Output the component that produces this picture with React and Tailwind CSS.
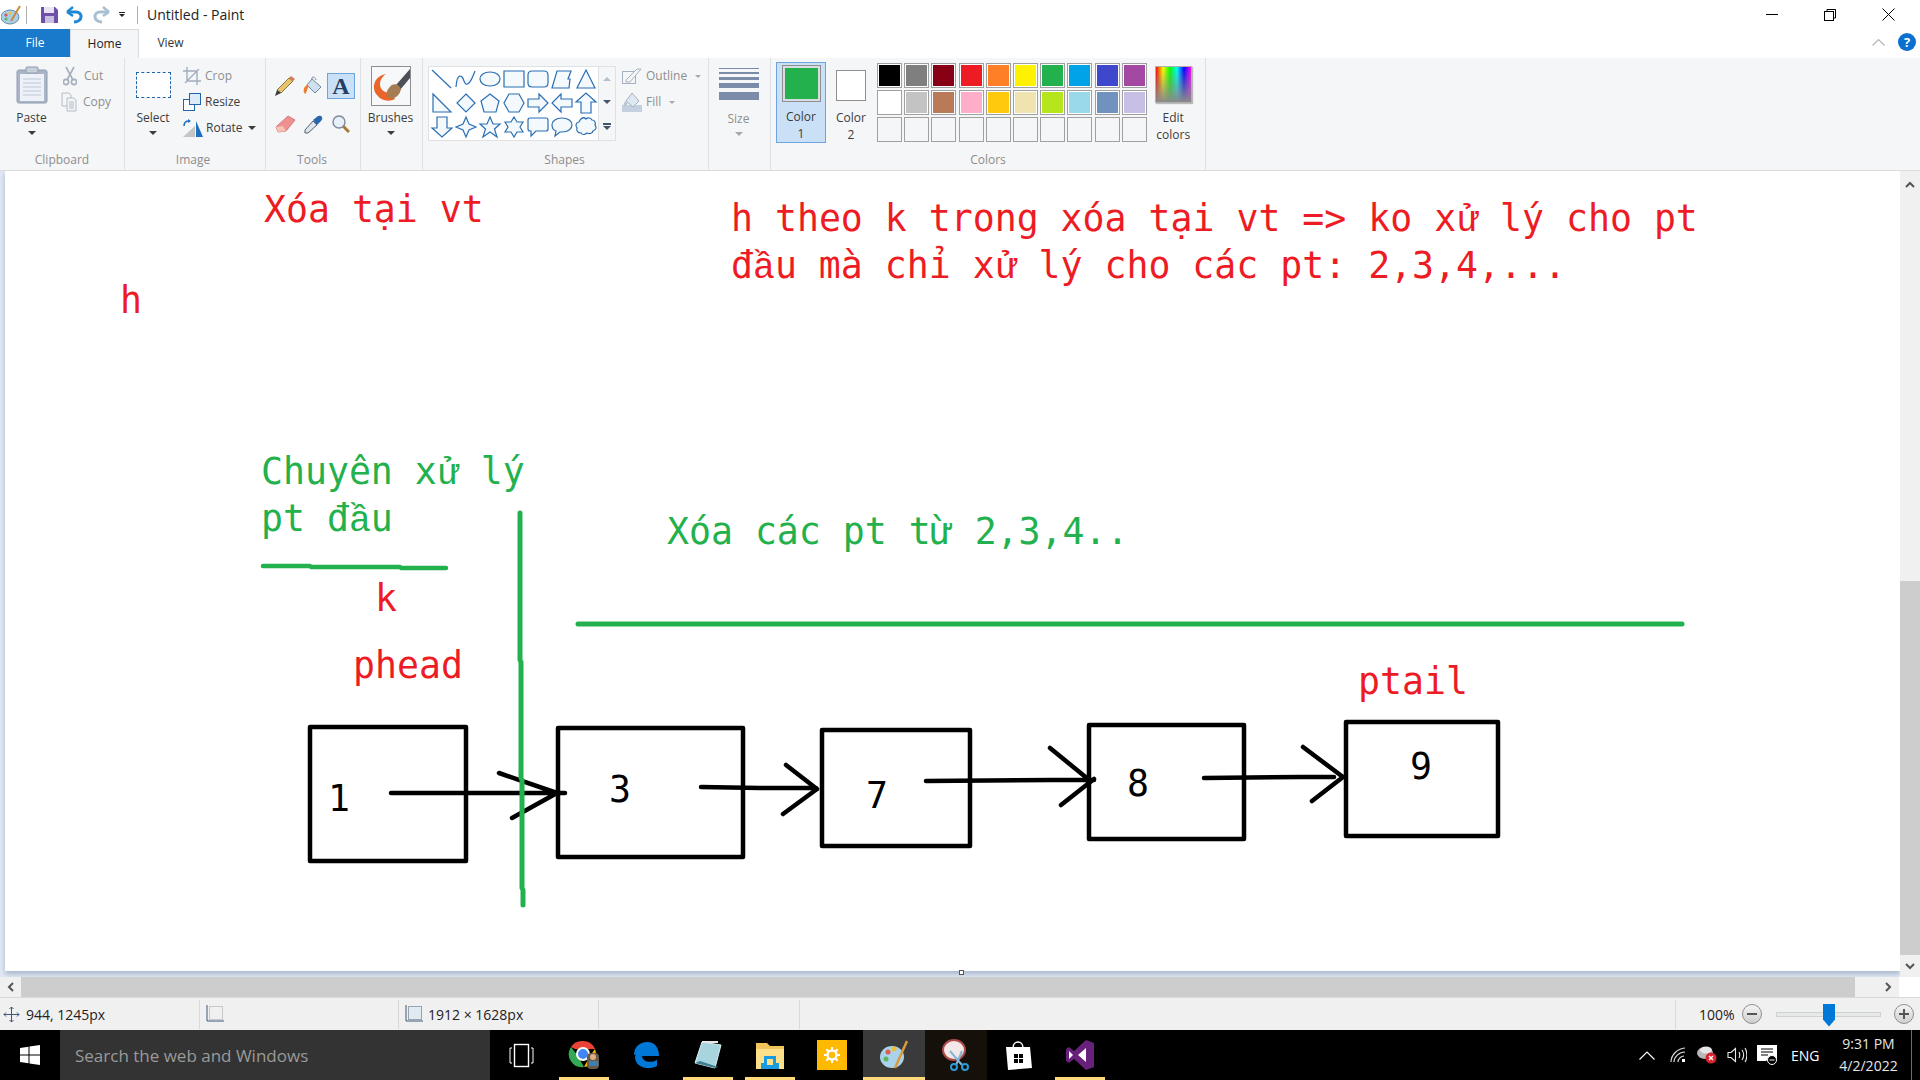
import React from "react";

const row1 = ["bg-[#000000]", "bg-[#7f7f7f]", "bg-[#880015]", "bg-[#ed1c24]", "bg-[#ff7f27]", "bg-[#fff200]", "bg-[#22b14c]", "bg-[#00a2e8]", "bg-[#3f48cc]", "bg-[#a349a4]"];
const row2 = ["bg-[#ffffff]", "bg-[#c3c3c3]", "bg-[#b97a57]", "bg-[#ffaec9]", "bg-[#ffc90e]", "bg-[#efe4b0]", "bg-[#b5e61d]", "bg-[#99d9ea]", "bg-[#7092be]", "bg-[#c8bfe7]"];
const row3 = Array(10).fill("bg-[#f5f6f7]");

const shapes = [
  "M2 3L21 21",
  "M2 20C3 6 8 7 10 14C12 20 16 18 21 4",
  "M12 5C18 5 22 8 22 12C22 16 18 19 12 19C6 19 2 16 2 12C2 8 6 5 12 5Z",
  "M2 4H22V20H2Z",
  "M6 4H18Q22 4 22 8V16Q22 20 18 20H6Q2 20 2 16V8Q2 4 6 4Z",
  "M2 21L7 4H21L18 12H20L19 21Z",
  "M12 3L21 21H3Z",
  "M3 3L21 21H3Z",
  "M12 3L21 12L12 21L3 12Z",
  "M12 3L21 10L18 21H6L3 10Z",
  "M7 3H17L22 12L17 21H7L2 12Z",
  "M2 8H13V3L22 12L13 21V16H2Z",
  "M22 8H11V3L2 12L11 21V16H22Z",
  "M7 22V11H2L12 2L22 11H17V22Z",
  "M7 2V13H2L12 22L22 13H17V2Z",
  "M12 2L15 9L22 12L15 15L12 22L9 15L2 12L9 9Z",
  "M12 2L15 9H22L16.5 14L19 22L12 17L5 22L7.5 14L2 9H9Z",
  "M12 2L15 7H21L18 12L21 17H15L12 22L9 17H3L6 12L3 7H9Z",
  "M4 3H20Q22 3 22 5V14Q22 16 20 16H10L5 21V16H4Q2 16 2 14V5Q2 3 4 3Z",
  "M12 3C18 3 22 6 22 10C22 14 18 17 12 17H10L5 21L6 16C3 15 2 12 2 10C2 6 6 3 12 3Z",
  "M7 4C9 2 11 3 12 4C14 2 17 3 18 5C21 5 22 8 21 10C23 12 22 15 19 16C18 19 15 19 13 18C11 20 8 20 7 18C4 18 2 16 3 13C1 11 2 7 5 7C5 6 6 5 7 4Z",
];

const Caret = ({ gray }) => (
  <div className={`mx-auto h-0 w-0 border-x-[4px] border-t-[4px] border-x-transparent ${gray ? "border-t-[#a8a8a8]" : "border-t-[#3c3c3c]"}`} />
);

const GroupLabel = ({ children }) => (
  <div className="absolute bottom-[2px] left-0 right-0 text-center text-[12px] leading-4 text-[#8d8d8d]">{children}</div>
);

const Paste = () => (
  <svg width="32" height="38" viewBox="0 0 32 38">
    <rect x="1" y="4" width="30" height="33" rx="2" fill="#aab6c8" stroke="#8f9bb0" />
    <rect x="4" y="8" width="24" height="27" fill="#eef2f8" />
    <path d="M7 13H25M7 17H25M7 21H25M7 25H25M7 29H25" stroke="#b9c7da" />
    <rect x="10" y="1" width="12" height="6" rx="1" fill="#c9cfd8" stroke="#8f9bb0" />
  </svg>
);

const Scissors = () => (
  <svg width="14" height="20" viewBox="0 0 14 20" fill="none" stroke="#a5afbd" strokeWidth="1.6">
    <path d="M3 1L10 14M11 1L4 14" />
    <circle cx="3" cy="16" r="2.6" />
    <circle cx="11" cy="16" r="2.6" />
  </svg>
);

const CopyIcon = () => (
  <svg width="16" height="20" viewBox="0 0 16 20" fill="#f3f5f8" stroke="#b4bcc8">
    <path d="M1 1H8L10 3V14H1Z" />
    <path d="M6 6H13L15 8V19H6Z" />
    <path d="M8 10H13M8 12H13M8 14H13M8 16H13" />
  </svg>
);

const CropIcon = () => (
  <svg width="18" height="18" viewBox="0 0 18 18" fill="none" stroke="#a3adbd" strokeWidth="1.4">
    <path d="M4 0V14H18M0 4H14V18M2 16L16 2" />
  </svg>
);

const ResizeIcon = () => (
  <svg width="18" height="18" viewBox="0 0 18 18">
    <rect x="0.5" y="6.5" width="11" height="11" fill="#fff" stroke="#1f63a8" />
    <rect x="6.5" y="0.5" width="11" height="11" fill="#dcebf7" stroke="#1f63a8" />
  </svg>
);

const RotateIcon = () => (
  <svg width="20" height="18" viewBox="0 0 20 18">
    <path d="M0 18L12 7V18Z" fill="#c4c4c4" />
    <path d="M13 2L20 18H13Z" fill="#1f6fc0" />
    <path d="M1 7C1 3 3 2 6 2" fill="none" stroke="#1f6fc0" strokeWidth="1.5" />
    <path d="M5 0L8 2L5 4Z" fill="#1f6fc0" />
  </svg>
);

const Pencil = () => (
  <svg width="20" height="20" viewBox="0 0 20 20">
    <path d="M14 2L18 5L6 17L2 14Z" fill="#e8c46a" stroke="#6b5a2a" strokeWidth="0.8" />
    <path d="M14 2L16 0L20 3L18 5Z" fill="#d97a5a" />
    <path d="M2 14L6 17L0 20Z" fill="#3c3c3c" />
  </svg>
);

const Bucket = () => (
  <svg width="20" height="20" viewBox="0 0 20 20">
    <path d="M9 3L18 11L12 17L4 9Z" fill="#cfe0ef" stroke="#6f87a0" />
    <path d="M9 4C8 0 12 0 13 4" fill="none" stroke="#6f87a0" />
    <path d="M4 9C0 11 0 16 2 18C4 17 4 12 6 10Z" fill="#f07a2e" />
  </svg>
);

const Eraser = () => (
  <svg width="21" height="18" viewBox="0 0 21 18">
    <path d="M13 1L20 5L11 16L3 17L1 12Z" fill="#ee8f90" stroke="#d77a7a" />
    <path d="M1 12L8 11L11 16L3 17Z" fill="#f6c4b4" />
  </svg>
);

const Dropper = () => (
  <svg width="19" height="19" viewBox="0 0 19 19">
    <path d="M9 6L13 10L4 18L1 18L1 15Z" fill="#dfe5ec" stroke="#55606e" />
    <path d="M9 5L14 1Q17 0 18 2Q19 4 17 6L13 10Z" fill="#2667b0" />
  </svg>
);

const Magnifier = () => (
  <svg width="18" height="18" viewBox="0 0 18 18">
    <path d="M10 10L17 17" stroke="#a9793a" strokeWidth="3" />
    <circle cx="7" cy="7" r="6" fill="#e8f1fa" stroke="#7e8a99" strokeWidth="1.4" />
  </svg>
);

const BrushIcon = () => (
  <svg width="40" height="40" viewBox="0 0 40 40">
    <rect x="0.5" y="0.5" width="39" height="39" fill="#f7f8fa" stroke="#8f8f8f" />
    <path d="M39 3L25 19L29 24L39 12Z" fill="#4b4f57" />
    <path d="M15 8C3 10 0 22 6 29C10 35 18 36 24 33L20 27C14 27 9 24 9 18C9 14 12 10 15 8Z" fill="#e9652a" />
    <path d="M18 22C22 16 28 18 30 23C29 30 22 34 18 32C15 29 15 25 18 22Z" fill="#a67c52" />
  </svg>
);

const OutlineIcon = () => (
  <svg width="20" height="16" viewBox="0 0 20 16" fill="none" stroke="#a6b2c2">
    <rect x="0.5" y="3.5" width="13" height="12" />
    <path d="M4 12L15 1L19 1L8 14L4 14Z" fill="#f5f6f7" />
  </svg>
);

const FillIcon = () => (
  <svg width="20" height="20" viewBox="0 0 20 20">
    <rect x="0" y="13" width="20" height="7" fill="#c4d0e0" />
    <path d="M10 1L17 9L11 15L4 9Z" fill="#dfe7f0" stroke="#a6b2c2" />
    <path d="M4 9C1 11 1 14 3 15C5 14 5 11 6 10Z" fill="#b9c6d6" />
  </svg>
);

const Clipboard = () => (
  <div className="relative flex w-[125px] shrink-0 border-r border-[#dfe1e3] pl-[14px] pt-[8px]">
    <div className="flex w-[35px] flex-col items-center">
      <Paste />
      <div className="mt-[6px] text-[12px] leading-4">Paste</div>
      <div className="mt-[5px] w-full"><Caret /></div>
    </div>
    <div className="ml-[12px] flex flex-col gap-[6px] text-[12px] leading-5 text-[#8f8f8f]">
      <div className="flex h-[20px] items-center gap-[7px] pl-[2px]"><Scissors />Cut</div>
      <div className="flex h-[20px] items-center gap-[6px]"><CopyIcon />Copy</div>
    </div>
    <GroupLabel>Clipboard</GroupLabel>
  </div>
);

const ImageGroup = () => (
  <div className="relative flex w-[141px] shrink-0 border-r border-[#dfe1e3] pl-[10px] pt-[8px]">
    <div className="flex w-[36px] flex-col items-center">
      <div className="mt-[6px] h-[26px] w-[35px] border border-dashed border-[#1f63a8] bg-white" />
      <div className="mt-[12px] text-[12px] leading-4">Select</div>
      <div className="mt-[5px] w-full"><Caret /></div>
    </div>
    <div className="ml-[12px] flex flex-col gap-[6px] text-[12px] leading-5">
      <div className="flex h-[20px] items-center gap-[4px] text-[#8f8f8f]"><CropIcon />Crop</div>
      <div className="flex h-[20px] items-center gap-[4px]"><ResizeIcon />Resize</div>
      <div className="flex h-[20px] items-center gap-[3px]">
        <RotateIcon />Rotate
        <div className="ml-[2px] h-0 w-0 border-x-[4px] border-t-[4px] border-x-transparent border-t-[#3c3c3c]" />
      </div>
    </div>
    <GroupLabel><span className="mr-[4px]">Image</span></GroupLabel>
  </div>
);

const Tools = () => (
  <div className="relative w-[95px] shrink-0 border-r border-[#dfe1e3] pl-[5px] pt-[15px]">
    <div className="grid grid-cols-[repeat(3,28px)] grid-rows-[26px_26px] gap-y-[12px]">
      <div className="flex items-center justify-center"><Pencil /></div>
      <div className="flex items-center justify-center"><Bucket /></div>
      <div className="flex items-center justify-center border border-[#6ca4df] bg-[#c9e0f7] font-['Liberation_Serif',serif] text-[24px] font-bold leading-none text-[#1f3f66]">A</div>
      <div className="flex items-center justify-center"><Eraser /></div>
      <div className="flex items-center justify-center"><Dropper /></div>
      <div className="flex items-center justify-center"><Magnifier /></div>
    </div>
    <GroupLabel><span className="mr-[2px]">Tools</span></GroupLabel>
  </div>
);

const Brushes = () => (
  <div className="flex w-[62px] shrink-0 flex-col items-center border-r border-[#dfe1e3] pr-[2px] pt-[8px]">
    <BrushIcon />
    <div className="mt-[4px] text-[12px] leading-4">Brushes</div>
    <div className="mt-[5px] w-full"><Caret /></div>
  </div>
);

const Shapes = () => (
  <div className="relative flex w-[286px] shrink-0 border-r border-[#dfe1e3] pl-[5px] pt-[8px]">
    <div className="flex h-[75px]">
      <div className="grid h-[75px] w-[171px] grid-cols-[repeat(7,24px)] grid-rows-[repeat(3,24px)] border border-[#dfe1e3] bg-white pl-[1px]">
        {shapes.map((d, i) => (
          <svg key={i} width="24" height="24" viewBox="0 0 24 24" fill="#f4f9fd" stroke="#2a6fb3" strokeWidth="1.2">
            <path d={d} />
          </svg>
        ))}
      </div>
      <div className="flex w-[17px] flex-col items-center justify-between border border-l-0 border-[#dfe1e3] py-[10px]">
        <div className="h-0 w-0 border-x-[4px] border-b-[4px] border-x-transparent border-b-[#b8bec6]" />
        <div className="h-0 w-0 border-x-[4px] border-t-[4px] border-x-transparent border-t-[#44546a]" />
        <div className="flex flex-col items-center gap-[1px]">
          <div className="h-[2px] w-[8px] bg-[#44546a]" />
          <div className="h-0 w-0 border-x-[4px] border-t-[4px] border-x-transparent border-t-[#44546a]" />
        </div>
      </div>
    </div>
    <div className="ml-[6px] flex flex-col gap-[6px] text-[12px] leading-5 text-[#8f8f8f]">
      <div className="flex h-[20px] items-center gap-[4px]">
        <OutlineIcon />Outline
        <div className="ml-[4px] h-0 w-0 border-x-[3px] border-t-[3px] border-x-transparent border-t-[#a8a8a8]" />
      </div>
      <div className="flex h-[20px] items-center gap-[4px]">
        <FillIcon />Fill
        <div className="ml-[4px] h-0 w-0 border-x-[3px] border-t-[3px] border-x-transparent border-t-[#a8a8a8]" />
      </div>
    </div>
    <GroupLabel><span className="mr-[2px]">Shapes</span></GroupLabel>
  </div>
);

const SizeGroup = () => (
  <div className="flex w-[62px] shrink-0 flex-col items-center border-r border-[#dfe1e3] pr-[2px] pt-[10px] text-[12px] leading-4 text-[#8f8f8f]">
    <div className="flex w-[40px] flex-col">
      <div className="h-px bg-[#7b8cab]" />
      <div className="mt-[3px] h-[2px] bg-[#7b8cab]" />
      <div className="mt-[3px] h-[3px] bg-[#7b8cab]" />
      <div className="mt-[3px] h-[5px] bg-[#7b8cab]" />
      <div className="mt-[4px] h-[8px] bg-[#7b8cab]" />
    </div>
    <div className="mt-[11px]">Size</div>
    <div className="mt-[5px] w-full"><Caret gray /></div>
  </div>
);

const Colors = () => (
  <div className="relative flex w-[435px] shrink-0 border-r border-[#dfe1e3] pl-[5px] pt-[4px] text-[12px] leading-[17px]">
    <div className="flex h-[81px] w-[50px] flex-col items-center border border-[#6ca4df] bg-[#c9e0f7] pt-[2px]">
      <div className="h-[41px] w-[39px] border border-[#8f8f8f] bg-[#d8dde2] p-[2px]">
        <div className="h-full w-full bg-[#22b14c]" />
      </div>
      <div className="mt-[6px] text-center">Color<br />1</div>
    </div>
    <div className="ml-[10px] flex w-[30px] flex-col items-center pt-[8px]">
      <div className="h-[31px] w-[30px] border border-[#8f8f8f] bg-white" />
      <div className="mt-[8px] text-center">Color<br />2</div>
    </div>
    <div className="ml-[11px] mt-px flex flex-col gap-[2px]">
      {[row1, row2, row3].map((row, r) => (
        <div key={r} className="flex gap-[2.2px]">
          {row.map((c, i) => (
            <div key={i} className={`h-[25px] w-[25px] border border-[#a0a0a0] ${r < 2 ? "p-[1px]" : ""} bg-white`}>
              <div className={`h-full w-full ${c}`} />
            </div>
          ))}
        </div>
      ))}
    </div>
    <div className="ml-[8px] flex w-[37px] flex-col items-center pt-[4px]">
      <div className="h-[37px] w-[37px] border border-[#b0b0b0] bg-[linear-gradient(to_bottom,transparent,#8a8a8a),linear-gradient(to_right,#ff0000,#ffff00,#00ff00,#00ffff,#0000ff,#ff00ff)] shadow-[1px_1px_1px_#bbb]" />
      <div className="mt-[6px] text-center">Edit<br />colors</div>
    </div>
    <GroupLabel>Colors</GroupLabel>
  </div>
);

const TitleBar = () => (
  <div className="flex h-[29px] items-center bg-white">
    <svg className="ml-[1px]" width="20" height="20" viewBox="0 0 20 20">
      <ellipse cx="9" cy="12" rx="9" ry="7" fill="#a9cfe8" stroke="#6a8aa5" />
      <circle cx="5" cy="10" r="1.6" fill="#d9534f" /><circle cx="9" cy="8" r="1.6" fill="#f2c037" /><circle cx="5" cy="14" r="1.6" fill="#5cb85c" />
      <path d="M19 1L10 16" stroke="#c98a3a" strokeWidth="2" />
    </svg>
    <div className="ml-[5px] h-[18px] w-px bg-[#b0b0b0]" />
    <svg className="ml-[14px]" width="17" height="17" viewBox="0 0 17 17">
      <path d="M0 1H14L17 4V17H0Z" fill="#6f4fa8" />
      <rect x="3" y="1" width="10" height="6" fill="#e8e4f2" />
      <rect x="4" y="10" width="9" height="7" fill="#c9bfe0" />
    </svg>
    <svg className="ml-[8px]" width="18" height="18" viewBox="0 0 18 18" fill="none" stroke="#1e88d6" strokeWidth="3">
      <path d="M3 6H10C17 6 17 16 8 16" /><path d="M1 6L7 1M1 6L7 10" strokeWidth="2.4" />
    </svg>
    <svg className="ml-[8px]" width="18" height="18" viewBox="0 0 18 18" fill="none" stroke="#a9bfd2" strokeWidth="3">
      <path d="M15 6H8C1 6 1 16 10 16" /><path d="M17 6L11 1M17 6L11 10" strokeWidth="2.4" />
    </svg>
    <div className="ml-[9px] flex flex-col items-center gap-px">
      <div className="h-px w-[6px] bg-[#222]" />
      <div className="h-0 w-0 border-x-[3px] border-t-[3px] border-x-transparent border-t-[#222]" />
    </div>
    <div className="ml-[12px] h-[18px] w-px bg-[#b0b0b0]" />
    <div className="ml-[9px] text-[14px] leading-5 text-[#222]">Untitled - Paint</div>
    <div className="ml-auto flex items-center">
      <div className="flex w-[58px] justify-center"><div className="h-px w-[12px] bg-black" /></div>
      <div className="flex w-[58px] justify-center">
        <svg width="12" height="12" viewBox="0 0 12 12" fill="none" stroke="#000"><path d="M3 2.5V0.5H11.5V9H9.5" /><rect x="0.5" y="2.5" width="9" height="9" /></svg>
      </div>
      <div className="mr-[3px] flex w-[58px] justify-center">
        <svg width="13" height="13" viewBox="0 0 13 13" stroke="#000"><path d="M0.5 0.5L12.5 12.5M12.5 0.5L0.5 12.5" /></svg>
      </div>
    </div>
  </div>
);

const TabRow = () => (
  <div className="relative z-10 -mb-px flex h-[29px] bg-white text-[12px]">
    <div className="flex h-[28px] w-[70px] items-center justify-center bg-[#1979ca] text-white">File</div>
    <div className="flex h-[29px] w-[69px] items-center justify-center border-x border-t border-[#dadbdc] bg-[#f5f6f7] text-[#222]">Home</div>
    <div className="flex h-[28px] w-[65px] items-center justify-center pr-[2px] text-[#333]">View</div>
    <div className="ml-auto mr-[4px] flex items-center gap-[13px] pb-[3px]">
      <svg width="13" height="8" viewBox="0 0 13 8" fill="none" stroke="#b5b5b5" strokeWidth="1.2"><path d="M0.5 7.5L6.5 1.5L12.5 7.5" /></svg>
      <div className="flex h-[18px] w-[18px] items-center justify-center rounded-full bg-[#0a6fcf] text-[13px] font-bold leading-none text-white">?</div>
    </div>
  </div>
);

const Ribbon = () => (
  <div className="flex h-[114px] border-y border-[#dadbdc] bg-[#f5f6f7] text-[#3c3c3c]">
    <Clipboard />
    <ImageGroup />
    <Tools />
    <Brushes />
    <Shapes />
    <SizeGroup />
    <Colors />
  </div>
);

const Drawing = () => (
  <svg className="absolute inset-0" width="1900" height="806" viewBox="0 171 1900 806" fill="none" strokeLinecap="round" strokeLinejoin="round">
    <g stroke="#000" strokeLinecap="butt">
      <rect x="310" y="727" width="156" height="134" strokeWidth="4.5" />
      <rect x="558" y="728" width="185" height="129" strokeWidth="4.5" />
      <rect x="822" y="730" width="148" height="116" strokeWidth="4.5" />
      <rect x="1089" y="725" width="155" height="114" strokeWidth="4.5" />
      <rect x="1346" y="722" width="152" height="114" strokeWidth="4.5" />
    </g>
    <g stroke="#000" strokeWidth="4.5">
      <path d="M391 793H565M499 773L557 793M512 818L557 793" />
      <path d="M701 787L760 788H816M786 765L817 789M783 814L817 789" />
      <path d="M926 781L1052 780H1094M1050 748L1088 779M1061 805L1094 779" />
      <path d="M1204 778L1300 777H1334M1303 747L1343 777M1312 801L1343 777" />
    </g>
    <g stroke="#22b14c" strokeWidth="5">
      <path d="M520 513V660L521 662V778L522 780V888L523 890V905" />
      <path d="M263 566H310L311 567H400L401 568H446" strokeWidth="4.5" />
      <path d="M578 624H1682" />
    </g>
  </svg>
);

const canvasFont = "absolute font-['DejaVu_Sans_Mono',monospace] text-[36.5px] leading-[47px] whitespace-pre";

// DejaVu Sans Mono misplaces the marks on these two letters, Liberation Mono has them whole
const Vn = ({ children }) => <span className="font-['Liberation_Mono',monospace] leading-[0]">{children}</span>;

const Canvas = () => (
  <div className="relative flex-1 overflow-hidden bg-[#dfe8f3] pl-[5px]">
    <div className="h-[800px] bg-white shadow-[0_3px_5px_#a9b6cb]" />
    <Drawing />
    <div className={`${canvasFont} left-[264px] top-[15px] text-[#ed1c24]`}>Xóa tại vt</div>
    <div className={`${canvasFont} left-[120px] top-[106px] text-[#ed1c24]`}>h</div>
    <div className={`${canvasFont} left-[731px] top-[24px] text-[#ed1c24]`}>
      h theo k trong xóa tại vt =&gt; ko x<Vn>ử</Vn> lý cho pt{"\n"}đ<Vn>ầ</Vn>u mà chỉ x<Vn>ử</Vn> lý cho các pt: 2,3,4,...
    </div>
    <div className={`${canvasFont} left-[261px] top-[277px] text-[#22b14c]`}>
      Chuyên x<Vn>ử</Vn> lý{"\n"}pt đ<Vn>ầ</Vn>u
    </div>
    <div className={`${canvasFont} left-[667px] top-[337px] text-[#22b14c]`}>Xóa các pt từ 2,3,4..</div>
    <div className={`${canvasFont} left-[375px] top-[404px] text-[#ed1c24]`}>k</div>
    <div className={`${canvasFont} left-[353px] top-[471px] text-[#ed1c24]`}>phead</div>
    <div className={`${canvasFont} left-[1358px] top-[487px] text-[#ed1c24]`}>ptail</div>
    <div className={`${canvasFont} left-[328px] top-[604px] text-black`}>1</div>
    <div className={`${canvasFont} left-[609px] top-[595px] text-black`}>3</div>
    <div className={`${canvasFont} left-[866px] top-[601px] text-black`}>7</div>
    <div className={`${canvasFont} left-[1127px] top-[589px] text-black`}>8</div>
    <div className={`${canvasFont} left-[1410px] top-[572px] text-black`}>9</div>
    <div className="absolute left-[959px] top-[799px] h-[5px] w-[5px] border border-[#555] bg-white" />
  </div>
);

const VScroll = () => (
  <div className="flex w-[20px] shrink-0 flex-col items-center bg-[#f0f0f0]">
    <svg className="mt-[10px]" width="10" height="7" viewBox="0 0 10 7" fill="none" stroke="#555" strokeWidth="2"><path d="M1 6L5 2L9 6" /></svg>
    <div className="mt-[393px] h-[374px] w-full bg-[#cdcdcd]" />
    <svg className="mt-auto mb-[7px]" width="10" height="7" viewBox="0 0 10 7" fill="none" stroke="#555" strokeWidth="2"><path d="M1 1L5 5L9 1" /></svg>
  </div>
);

const HScroll = () => (
  <div className="flex h-[20px] shrink-0 items-center bg-[#f0f0f0]">
    <div className="flex w-[21px] justify-center">
      <svg width="7" height="10" viewBox="0 0 7 10" fill="none" stroke="#555" strokeWidth="2"><path d="M6 1L2 5L6 9" /></svg>
    </div>
    <div className="h-full w-[1834px] bg-[#cdcdcd]" />
    <div className="ml-[26px] flex w-[14px] justify-center">
      <svg width="7" height="10" viewBox="0 0 7 10" fill="none" stroke="#555" strokeWidth="2"><path d="M1 1L5 5L1 9" /></svg>
    </div>
    <div className="ml-auto h-full w-[21px] bg-white" />
  </div>
);

const ZoomButton = ({ plus }) => (
  <div className="flex h-[20px] w-[20px] items-center justify-center rounded-full border border-[#8f8f8f] bg-[linear-gradient(#f5f5f5,#cfcfcf)]">
    <svg width="12" height="12" viewBox="0 0 12 12" stroke="#555" strokeWidth="2">
      <path d={plus ? "M1 6H11M6 1V11" : "M1 6H11"} />
    </svg>
  </div>
);

const StatusBar = () => (
  <div className="flex h-[33px] shrink-0 items-center border-t border-[#d9d9d9] bg-[#f0f0f0] text-[14px] text-[#222]">
    <div className="flex h-[29px] w-[200px] items-center gap-[6px] border-r border-[#d9d9d9] pl-[3px]">
      <svg width="17" height="17" viewBox="0 0 17 17" fill="none" stroke="#3f5878"><path d="M8.5 1V16M1 8.5H16M6.5 3L8.5 1L10.5 3M6.5 14L8.5 16L10.5 14M3 6.5L1 8.5L3 10.5M14 6.5L16 8.5L14 10.5" /></svg>
      944, 1245px
    </div>
    <div className="flex h-[29px] w-[199px] items-center border-r border-[#d9d9d9] pl-[6px]">
      <svg width="18" height="18" viewBox="0 0 18 18" fill="none"><rect x="3.5" y="1.5" width="13" height="13" stroke="#9aa3ad" strokeDasharray="1 1" /><path d="M1 0V16H18" stroke="#3f5878" /></svg>
    </div>
    <div className="flex h-[29px] w-[200px] items-center gap-[5px] border-r border-[#d9d9d9] pl-[6px]">
      <svg width="18" height="18" viewBox="0 0 18 18" fill="none"><rect x="3.5" y="1.5" width="13" height="13" fill="#dfeaf3" stroke="#9aa3ad" /><path d="M1 0V16H18" stroke="#3f5878" /></svg>
      1912 × 1628px
    </div>
    <div className="h-[29px] w-[201px] border-r border-[#d9d9d9]" />
    <div className="h-[29px] w-[876px] border-r border-[#d9d9d9]" />
    <div className="ml-[23px] w-[43px]">100%</div>
    <ZoomButton />
    <div className="relative ml-[14px] h-[5px] w-[105px] border border-[#cfd3d0] bg-[#e6e9e6]">
      <div className="absolute left-[46px] top-[-9px] h-[23px] w-[12px] bg-[#0078d7] [clip-path:polygon(0_0,100%_0,100%_70%,50%_100%,0_70%)]" />
    </div>
    <div className="ml-[13px]"><ZoomButton plus /></div>
  </div>
);

const apps = [
  { bar: true, icon: (
    <svg width="32" height="32" viewBox="0 0 32 32">
      <path d="M15 2A13 13 0 0 1 27 10H15Z" fill="#ea4335" /><path d="M27 10A13 13 0 0 1 16 28L22 17Z" fill="#fbbc05" /><path d="M3 8A13 13 0 0 0 16 28L10 17Z" fill="#34a853" /><path d="M3 8A13 13 0 0 1 15 2V10H7Z" fill="#ea4335" />
      <circle cx="15" cy="15" r="6" fill="#4285f4" stroke="#fff" strokeWidth="2" />
      <rect x="19" y="14" width="12" height="16" rx="4" fill="#6a5a4a" /><circle cx="25" cy="18" r="3" fill="#e0b080" /><rect x="21" y="22" width="9" height="5" fill="#3f7fb0" />
    </svg>
  ) },
  { bar: false, icon: <svg width="28" height="28" viewBox="0 0 28 28"><path d="M2 14C2 6 8 1 15 1C23 1 27 7 27 15H10C10 20 18 23 25 19V25C16 30 3 26 3 16C3 14 5 11 9 9C8 10 7 12 7 13C9 7 19 7 19 12H9" fill="#0078d7" /></svg> },
  { bar: true, icon: <svg width="28" height="30" viewBox="0 0 28 30"><path d="M8 2L27 5L21 28L1 23Z" fill="#a8d4e0" stroke="#d8eef3" /><path d="M1 23L21 28L24 27L6 21Z" fill="#3d7f8f" /><path d="M8 2H24" stroke="#e8e8e8" strokeWidth="2" /></svg> },
  { bar: true, icon: (
    <svg width="28" height="28" viewBox="0 0 28 28"><path d="M0 2H11L14 5H28V28H0Z" fill="#f2c55c" /><rect x="0" y="8" width="28" height="20" fill="#ffe08a" /><path d="M8 22V15H20V22H23V28H5V22Z" fill="#1a9be0" /><rect x="11" y="18" width="6" height="6" fill="#ffe08a" /></svg>
  ) },
  { bar: false, icon: (
    <div className="flex h-[30px] w-[30px] items-center justify-center bg-[#ffb900]">
      <svg width="16" height="16" viewBox="0 0 16 16" fill="none" stroke="#fff" strokeWidth="2.4"><circle cx="8" cy="8" r="4.5" /><path d="M8 0V3M8 13V16M0 8H3M13 8H16M2.3 2.3L4.5 4.5M11.5 11.5L13.7 13.7M13.7 2.3L11.5 4.5M4.5 11.5L2.3 13.7" strokeWidth="2" /></svg>
    </div>
  ) },
  { bar: true, active: "bg-[#3a3a3a]", icon: (
    <svg width="28" height="30" viewBox="0 0 28 30"><ellipse cx="12" cy="17" rx="12" ry="11" fill="#a9d3ea" /><circle cx="8" cy="12" r="2.5" fill="#e25b4f" /><circle cx="14" cy="9" r="2.5" fill="#f2c037" /><circle cx="6" cy="19" r="2.5" fill="#59b85c" /><path d="M27 1L15 28" stroke="#d99a3e" strokeWidth="2.5" /></svg>
  ) },
  { bar: false, active: "bg-[#15100a]", icon: (
    <svg width="28" height="32" viewBox="0 0 28 32" fill="none"><ellipse cx="12" cy="11" rx="11" ry="10" fill="#f3e7e7" stroke="#b04a4a" strokeWidth="2" /><path d="M8 12L20 26M20 12L14 26" stroke="#7fb8d8" strokeWidth="2" /><circle cx="12" cy="28" r="3" stroke="#2a9bd8" strokeWidth="2" /><circle cx="23" cy="28" r="3" stroke="#2a9bd8" strokeWidth="2" /></svg>
  ) },
  { bar: false, icon: (
    <svg width="27" height="30" viewBox="0 0 27 30"><path d="M8 8C8 0 18 0 18 8" fill="none" stroke="#fff" strokeWidth="1.5" /><path d="M1 7H25L27 28L3 30Z" fill="#fff" /><path d="M9 14H13V18H9ZM14 14H18V18H14ZM9 19H13V23H9ZM14 19H18V23H14Z" fill="#000" /></svg>
  ) },
  { bar: true, icon: (
    <svg width="28" height="30" viewBox="0 0 28 30"><path d="M20 0L28 3V27L20 30L8 19L3 23L0 21V9L3 7L8 11Z" fill="#68217a" /><path d="M20 8L12 15L20 22Z" fill="#fff" /><path d="M3 11V19L7 15Z" fill="#fff" /></svg>
  ) },
];

const Taskbar = () => (
  <div className="flex h-[50px] shrink-0 items-center bg-black text-white">
    <div className="flex h-full w-[60px] items-center justify-center">
      <svg width="20" height="20" viewBox="0 0 20 20" fill="#fff"><path d="M0 3L8.5 1.8V9.5H0ZM9.5 1.6L20 0V9.5H9.5ZM0 10.5H8.5V18.2L0 17ZM9.5 10.5H20V20L9.5 18.4Z" /></svg>
    </div>
    <div className="flex h-full w-[430px] items-center bg-[#333333] pl-[15px] pt-px text-[17px] text-[#9a9a9a]">Search the web and Windows</div>
    <div className="flex h-full w-[63px] items-center justify-center">
      <svg width="25" height="25" viewBox="0 0 25 25" fill="none" stroke="#fff"><rect x="5.5" y="1.5" width="14" height="22" strokeWidth="1.4" /><path d="M3 5H1V20H3M22 5H24V20H22" /></svg>
    </div>
    {apps.map((app, i) => (
      <div key={i} className={`relative flex h-full w-[62px] items-center justify-center ${app.active || ""}`}>
        {app.icon}
        {app.bar && <div className={`absolute bottom-0 h-[3px] bg-[#ffd97a] ${app.active ? "inset-x-0" : "left-[6px] w-[50px]"}`} />}
      </div>
    ))}
    <div className="ml-[528px] flex h-full w-[281px] items-center">
      <svg width="16" height="9" viewBox="0 0 16 9" fill="none" stroke="#fff" strokeWidth="1.2"><path d="M0.5 8.5L8 1L15.5 8.5" /></svg>
      <svg className="ml-[15px]" width="16" height="16" viewBox="0 0 16 16" fill="none" stroke="#d8d8d8" strokeWidth="1.2"><path d="M1 15C1 8 7 2 15 1M4 15C4 10 9 5 15 5M8 15C8 12 11 9 14 9" /><rect x="12" y="12" width="3" height="3" fill="#fff" stroke="none" /></svg>
      <svg className="ml-[11px]" width="20" height="18" viewBox="0 0 20 18"><ellipse cx="8" cy="7" rx="8" ry="6" fill="#b8b8b8" /><ellipse cx="9" cy="4" rx="6" ry="3.5" fill="#e5e5e5" /><circle cx="14" cy="12" r="5.5" fill="#d8232f" /><path d="M12 10L16 14M16 10L12 14" stroke="#fff" strokeWidth="1.4" /></svg>
      <svg className="ml-[10px]" width="20" height="16" viewBox="0 0 20 16" fill="none" stroke="#e8e8e8" strokeWidth="1.1"><path d="M1 5.5H4L8.5 1.5V14.5L4 10.5H1Z" /><path d="M12 5C13 7 13 9 12 11M15 3C17 6 17 10 15 13M18 1C20.5 5 20.5 11 18 15" /></svg>
      <svg className="ml-[10px]" width="21" height="20" viewBox="0 0 21 20"><path d="M0 0H20V14H13A5 5 0 0 0 9 16H0Z" fill="#fff" /><path d="M4 4H16M4 7H16M4 10H11" stroke="#000" /><circle cx="15" cy="15" r="4.5" fill="#000" stroke="#fff" /><path d="M12.5 15H17.5" stroke="#fff" /></svg>
      <div className="ml-[13px] text-[14px]">ENG</div>
      <div className="ml-[17px] w-[64px] text-center text-[14px] leading-[22px] text-[#e6e6e6]">9:31 PM<br />4/2/2022</div>
      <div className="ml-[10px] h-full w-px bg-[#6a6a6a]" />
    </div>
  </div>
);

export default function App() {
  return (
    <div className="flex h-screen w-[1920px] flex-col overflow-hidden bg-white font-['Open_Sans',sans-serif]">
      <TitleBar />
      <TabRow />
      <Ribbon />
      <div className="flex min-h-0 flex-1">
        <Canvas />
        <VScroll />
      </div>
      <HScroll />
      <StatusBar />
      <Taskbar />
    </div>
  );
}
